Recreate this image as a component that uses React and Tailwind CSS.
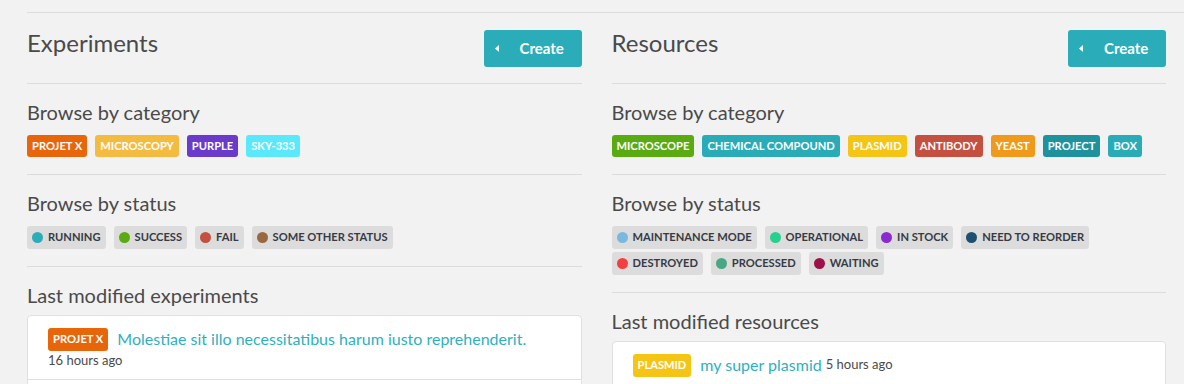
import React from 'react';

const expCategories = [
    { name: 'Projet X', color: '#e8650a' },
    { name: 'Microscopy', color: '#f4bb41' },
    { name: 'Purple', color: '#6a3acb' },
    { name: 'sky-333', color: '#5ae8fc' },
];

const expStatuses = [
    { name: 'Running', color: '#29adb9' },
    { name: 'Success', color: '#5aaa12' },
    { name: 'Fail', color: '#c5503f' },
    { name: 'Some other status', color: '#9a6840' },
];

const resCategories = [
    { name: 'Microscope', color: '#5aaa12' },
    { name: 'Chemical compound', color: '#2aacb8' },
    { name: 'Plasmid', color: '#f5c515' },
    { name: 'Antibody', color: '#c5503f' },
    { name: 'Yeast', color: '#f0991a' },
    { name: 'Project', color: '#1f939d' },
    { name: 'Box', color: '#2aacb8' },
];

const resStatuses = [
    { name: 'Maintenance mode', color: '#7ab8e0' },
    { name: 'Operational', color: '#22d38f' },
    { name: 'In stock', color: '#8a2bd0' },
    { name: 'Need to reorder', color: '#1f4f70' },
    { name: 'Destroyed', color: '#f24040' },
    { name: 'Processed', color: '#48a882' },
    { name: 'Waiting', color: '#a01048' },
];

function Badge({ name, color, tall }) {
    return (
        <span
            className={`inline-flex items-center px-[5px] rounded-[3px] text-white text-[11.15px] font-bold uppercase ${tall ? 'h-[23px]' : 'h-[22px]'}`}
            style={{ backgroundColor: color }}
        >
            {name}
        </span>
    );
}

function StatusPill({ name, color }) {
    return (
        <span className="inline-flex items-center h-[23px] pl-[5px] pr-[5px] rounded-[3px] bg-[#dcdcdc] text-[#363a45] text-[11.15px] font-bold uppercase">
            <span className="w-[11px] h-[11px] rounded-full mr-[5px]" style={{ backgroundColor: color }} />
            {name}
        </span>
    );
}

function Column({ title, categories, statuses, lastTitle, children }) {
    return (
        <div className="flex-1 min-w-0">
            {/* header */}
            <div className="flex justify-between items-start pt-[17px] pb-[16px] border-b border-[#dcdcdc]">
                <h2 className="text-[24px] leading-[26px] text-[#4a4a4a]">{title}</h2>
                <button className="flex items-center h-[37px] w-[98px] pl-[11px] rounded-[3px] bg-[#2aadb9] text-white text-[15px] font-bold">
                    <svg width="4" height="7" viewBox="0 0 4 7" className="mr-[21px]">
                        <path d="M4 0 L0 3.5 L4 7 Z" fill="white" />
                    </svg>
                    Create
                </button>
            </div>

            <div className="pt-[17px] pb-[17px] border-b border-[#dcdcdc]">
                <h3 className="text-[20px] leading-[22px] text-[#4a4a4a] mb-[12px]">Browse by category</h3>
                <div className="flex flex-wrap gap-x-[8px] gap-y-[3px]">
                    {categories.map((c) => <Badge key={c.name} {...c} />)}
                </div>
            </div>

            <div className="pt-[17px] pb-[17px] border-b border-[#dcdcdc]">
                <h3 className="text-[20px] leading-[22px] text-[#4a4a4a] mb-[12px]">Browse by status</h3>
                <div className="flex flex-wrap gap-x-[8px] gap-y-[3px]">
                    {statuses.map((s) => <StatusPill key={s.name} {...s} />)}
                </div>
            </div>

            <div className="pt-[17px]">
                <h3 className="text-[20px] leading-[22px] text-[#4a4a4a] mb-[9px]">{lastTitle}</h3>
                <div className="bg-white border border-[#e0e0e0] rounded-[4px]">
                    {children}
                </div>
            </div>
        </div>
    );
}

export default function App() {
    return (
        <div className="min-h-screen h-[384px] overflow-hidden bg-[#f2f2f2] pl-[27px] pt-[12px]" style={{ fontFamily: 'Lato, "Open Sans", sans-serif' }}>
            <div className="border-t border-[#dcdcdc] pr-[18px] flex gap-[30px]">
                <Column title="Experiments" categories={expCategories} statuses={expStatuses} lastTitle="Last modified experiments">
                    <div className="px-[20px] pt-[11px] pb-[10px] border-b border-[#e0e0e0]">
                        <div className="flex items-center">
                            <Badge name="Projet X" color="#e8650a" tall />
                            <a className="ml-[9px] text-[16px] text-[#2fb0bf]">Molestiae sit illo necessitatibus harum iusto reprehenderit.</a>
                        </div>
                        <div className="text-[13px] leading-[18px] text-[#4a4a4a]">16 hours ago</div>
                    </div>
                    <div className="h-[40px]" />
                </Column>
                <Column title="Resources" categories={resCategories} statuses={resStatuses} lastTitle="Last modified resources">
                    <div className="px-[20px] pt-[11px] pb-[10px]">
                        <div className="flex items-center">
                            <Badge name="Plasmid" color="#f5c515" tall />
                            <a className="ml-[9px] text-[16px] text-[#2fb0bf]">my super plasmid</a>
                            <span className="ml-[4px] text-[13px] text-[#4a4a4a]">5 hours ago</span>
                        </div>
                    </div>
                </Column>
            </div>
        </div>
    );
}
